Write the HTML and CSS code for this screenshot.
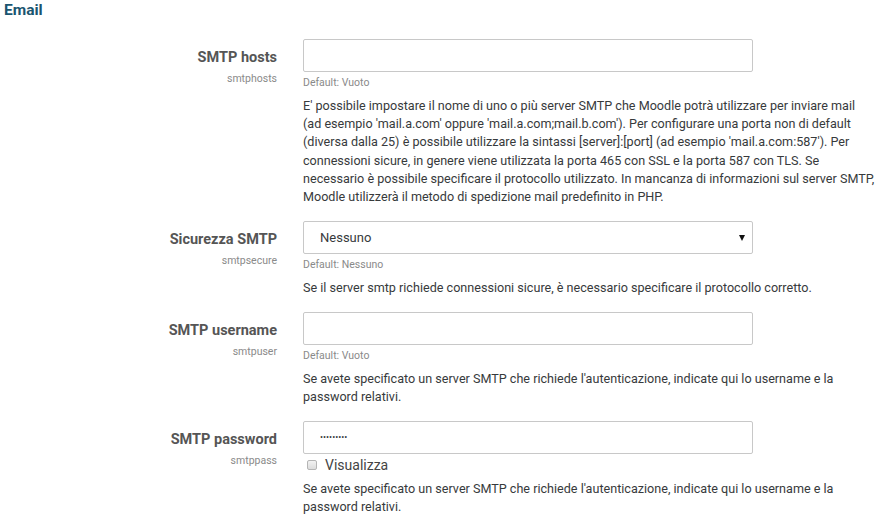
FILE: index.html
```html
<!DOCTYPE html>
<html lang="it">
  <head>
    <meta charset="UTF-8" />
    <meta name="viewport" content="width=device-width, initial-scale=1.0" />
    <title>Email - Impostazioni</title>
    <link rel="stylesheet" href="styles.css">
  </head>
  <body>
    <h3 class="section-title">Email</h3>

    <div class="setting">
      <div class="setting-label">
        <label for="smtphosts">SMTP hosts</label>
        <span class="setting-name">smtphosts</span>
      </div>
      <div class="setting-field">
        <input type="text" id="smtphosts" class="form-input" />
        <div class="default-info">Default: Vuoto</div>
        <p class="description">
          E' possibile impostare il nome di uno o più server SMTP che Moodle potrà utilizzare per inviare mail<br>
          (ad esempio 'mail.a.com' oppure 'mail.a.com;mail.b.com'). Per configurare una porta non di default<br>
          (diversa dalla 25) è possibile utilizzare la sintassi [server]:[port] (ad esempio 'mail.a.com:587'). Per<br>
          connessioni sicure, in genere viene utilizzata la porta 465 con SSL e la porta 587 con TLS. Se<br>
          necessario è possibile specificare il protocollo utilizzato. In mancanza di informazioni sul server SMTP,<br>
          Moodle utilizzerà il metodo di spedizione mail predefinito in PHP.
        </p>
      </div>
    </div>

    <div class="setting">
      <div class="setting-label">
        <label for="smtpsecure">Sicurezza SMTP</label>
        <span class="setting-name">smtpsecure</span>
      </div>
      <div class="setting-field">
        <div class="select-wrap">
          <select id="smtpsecure" class="form-input form-select">
            <option>Nessuno</option>
            <option>SSL</option>
            <option>TLS</option>
          </select>
        </div>
        <div class="default-info">Default: Nessuno</div>
        <p class="description">Se il server smtp richiede connessioni sicure, è necessario specificare il protocollo corretto.</p>
      </div>
    </div>

    <div class="setting">
      <div class="setting-label">
        <label for="smtpuser">SMTP username</label>
        <span class="setting-name">smtpuser</span>
      </div>
      <div class="setting-field">
        <input type="text" id="smtpuser" class="form-input" />
        <div class="default-info">Default: Vuoto</div>
        <p class="description">
          Se avete specificato un server SMTP che richiede l'autenticazione, indicate qui lo username e la<br>
          password relativi.
        </p>
      </div>
    </div>

    <div class="setting">
      <div class="setting-label">
        <label for="smtppass">SMTP password</label>
        <span class="setting-name">smtppass</span>
      </div>
      <div class="setting-field">
        <input type="password" id="smtppass" class="form-input form-password" value="123456789" />
        <label class="unmask">
          <input type="checkbox" class="unmask-box" />
          Visualizza
        </label>
        <p class="description">
          Se avete specificato un server SMTP che richiede l'autenticazione, indicate qui lo username e la<br>
          password relativi.
        </p>
      </div>
    </div>
  </body>
</html>
```

FILE: styles.css
```css
:root {
  --title-color: #1a5570;
  --label-color: #555555;
  --muted-color: #8a8a8a;
  --text-color: #373a3c;
  --border-color: #c8c8c8;
}

* {
  padding: 0;
  margin: 0;
  box-sizing: border-box;
}

body {
  font-family: Roboto, "Liberation Sans", sans-serif;
  color: var(--text-color);
  background: #ffffff;
  width: 888px;
}

.section-title {
  font-size: 15.5px;
  font-weight: 700;
  color: var(--title-color);
  line-height: 20px;
  padding: 0 0 0 4px;
  margin-bottom: 19px;
}

.setting {
  display: grid;
  grid-template-columns: 277px 1fr;
  column-gap: 26px;
  margin-bottom: 14.6px;
}

.setting-label {
  display: flex;
  flex-direction: column;
  align-items: flex-end;
  padding-top: 10px;
}

.setting-label label {
  font-size: 14.5px;
  font-weight: 700;
  color: var(--label-color);
  line-height: 18px;
}

.setting-name {
  font-size: 10.5px;
  color: var(--muted-color);
  line-height: 14px;
  margin-top: 5px;
}

.form-input {
  display: block;
  width: 450px;
  height: 33px;
  border: 1px solid var(--border-color);
  border-radius: 2px;
  background: #ffffff;
  font-family: inherit;
  font-size: 13px;
  color: var(--text-color);
  padding: 0 16px;
  outline: none;
}

.select-wrap {
  position: relative;
  width: 450px;
}

.form-select {
  appearance: none;
  -webkit-appearance: none;
}

.select-wrap::after {
  content: "";
  position: absolute;
  right: 8px;
  top: 14px;
  border-left: 3.5px solid transparent;
  border-right: 3.5px solid transparent;
  border-top: 6px solid #111111;
  pointer-events: none;
}

.form-password {
  font-size: 9px;
}

.default-info {
  font-size: 10.5px;
  color: var(--muted-color);
  line-height: 22px;
}

.description {
  font-size: 12.6px;
  line-height: 18.2px;
  margin-top: 3px;
}

.unmask {
  display: flex;
  align-items: center;
  gap: 8px;
  font-size: 14px;
  color: #444444;
  line-height: 23px;
  padding-left: 4px;
  margin-bottom: 3px;
}

.unmask-box {
  appearance: none;
  -webkit-appearance: none;
  width: 10px;
  height: 10px;
  border: 1px solid #b5b5b5;
  border-radius: 2px;
  background: linear-gradient(#f2f2f2, #dcdcdc);
}
```
